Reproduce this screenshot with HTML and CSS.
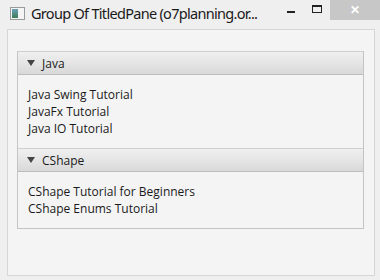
FILE: index.html
```html
<!DOCTYPE html>
<html lang="en">

<head>
    <meta charset="UTF-8">
    <title>Group Of TitledPane</title>
    <link rel="stylesheet" href="styles.css">
</head>

<body>
    <div class="window">
        <div class="titlebar">
            <div class="app-icon"><span class="app-icon-inner"></span></div>
            <div class="title">Group Of TitledPane (o7planning.or...</div>
            <div class="controls">
                <div class="btn-min"><span></span></div>
                <div class="btn-max"><span></span></div>
                <div class="btn-close">&#x2715;</div>
            </div>
        </div>
        <div class="client">
            <div class="accordion">
                <div class="pane">
                    <div class="pane-header"><span class="arrow"></span>Java</div>
                    <div class="pane-content">
                        <div>Java Swing Tutorial</div>
                        <div>JavaFx Tutorial</div>
                        <div>Java IO Tutorial</div>
                    </div>
                </div>
                <div class="pane">
                    <div class="pane-header"><span class="arrow"></span>CShape</div>
                    <div class="pane-content">
                        <div>CShape Tutorial for Beginners</div>
                        <div>CShape Enums Tutorial</div>
                    </div>
                </div>
            </div>
        </div>
    </div>
</body>

</html>
```

FILE: styles.css
```css
body {
    margin: 0;
    background: #efefef;
    font-family: "Open Sans", "Noto Sans", sans-serif;
}

.window {
    width: 380px;
    height: 280px;
    background: #efefef;
    display: flex;
    flex-direction: column;
}

.titlebar {
    height: 29px;
    display: flex;
    align-items: flex-start;
}

.app-icon {
    margin: 7px 0 0 10px;
    width: 11px;
    height: 9px;
    border: 1px solid #9a9a9a;
    background: #f4f4f4;
    display: flex;
    padding: 1px;
    box-sizing: content-box;
}

.app-icon-inner {
    width: 6px;
    height: 100%;
    background: linear-gradient(#6aa0b8, #3e7a56);
}

.title {
    margin: 3px 0 0 6px;
    font-family: "Noto Sans", "Open Sans", sans-serif;
    font-size: 14.5px;
    color: #1a1a1a;
    white-space: nowrap;
    letter-spacing: -0.7px;
}

.controls {
    margin-left: auto;
    display: flex;
    align-items: flex-start;
}

.btn-min,
.btn-max {
    width: 26px;
    height: 20px;
    display: flex;
    align-items: center;
    justify-content: center;
}

.btn-min span {
    width: 8px;
    height: 2px;
    background: #222;
    margin-top: 4px;
}

.btn-max span {
    width: 8px;
    height: 5px;
    border: 1px solid #222;
    border-top-width: 2px;
    margin-top: -2px;
}

.btn-close {
    width: 50px;
    height: 20px;
    background: #c7c7c7;
    color: #fff;
    font-size: 12px;
    font-weight: bold;
    text-align: center;
    line-height: 20px;
}

.client {
    margin: 0 5px 4px 7px;
    flex: 1;
    border: 1px solid #d6d6d6;
    background: #f4f4f4;
    padding: 21px 10px 0 9px;
}

.accordion {
    border: 1px solid #c4c4c4;
    border-top: none;
}

.pane-header {
    height: 22px;
    border-top: 1px solid #cfcfcf;
    border-bottom: 1px solid #bdbdbd;
    background: linear-gradient(#efefef, #e4e4e4 55%, #d8d8d8);
    display: flex;
    align-items: center;
    font-size: 12px;
    color: #1a1a1a;
    padding-left: 9px;
}

.arrow {
    width: 0;
    height: 0;
    border-left: 4px solid transparent;
    border-right: 4px solid transparent;
    border-top: 6px solid #444;
    margin-right: 7px;
}

.pane-content {
    padding: 11px 10px 11px 10px;
    background: #f4f4f4;
    font-size: 12px;
    line-height: 17px;
    color: #1a1a1a;
}
```
